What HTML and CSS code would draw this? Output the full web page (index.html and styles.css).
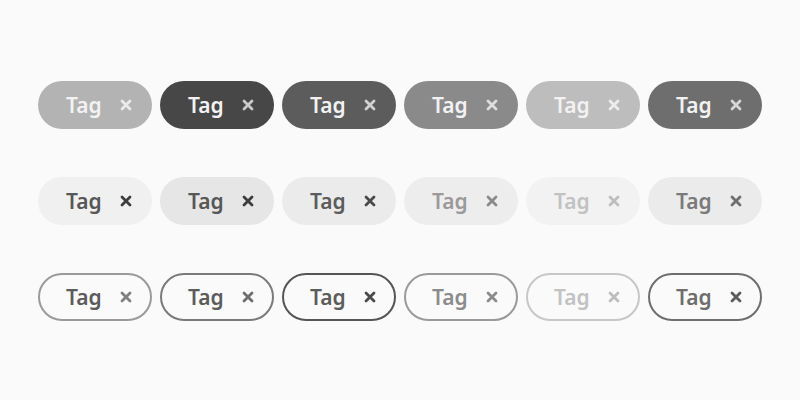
FILE: index.html
```html
<!DOCTYPE html>
<html>
<head>
<meta charset="utf-8">
<link rel="stylesheet" href="styles.css">
</head>
<body>
<main class="board">
  <div class="row">
    <span class="tag solid s1">Tag<span class="x"><svg viewBox="0 0 12 12"><path d="M2 2L10 10M10 2L2 10"/></svg></span></span>
    <span class="tag solid s2">Tag<span class="x"><svg viewBox="0 0 12 12"><path d="M2 2L10 10M10 2L2 10"/></svg></span></span>
    <span class="tag solid s3">Tag<span class="x"><svg viewBox="0 0 12 12"><path d="M2 2L10 10M10 2L2 10"/></svg></span></span>
    <span class="tag solid s4">Tag<span class="x"><svg viewBox="0 0 12 12"><path d="M2 2L10 10M10 2L2 10"/></svg></span></span>
    <span class="tag solid s5">Tag<span class="x"><svg viewBox="0 0 12 12"><path d="M2 2L10 10M10 2L2 10"/></svg></span></span>
    <span class="tag solid s6">Tag<span class="x"><svg viewBox="0 0 12 12"><path d="M2 2L10 10M10 2L2 10"/></svg></span></span>
  </div>
  <div class="row">
    <span class="tag soft t1">Tag<span class="x"><svg viewBox="0 0 12 12"><path d="M2 2L10 10M10 2L2 10"/></svg></span></span>
    <span class="tag soft t2">Tag<span class="x"><svg viewBox="0 0 12 12"><path d="M2 2L10 10M10 2L2 10"/></svg></span></span>
    <span class="tag soft t3">Tag<span class="x"><svg viewBox="0 0 12 12"><path d="M2 2L10 10M10 2L2 10"/></svg></span></span>
    <span class="tag soft t4">Tag<span class="x"><svg viewBox="0 0 12 12"><path d="M2 2L10 10M10 2L2 10"/></svg></span></span>
    <span class="tag soft t5">Tag<span class="x"><svg viewBox="0 0 12 12"><path d="M2 2L10 10M10 2L2 10"/></svg></span></span>
    <span class="tag soft t6">Tag<span class="x"><svg viewBox="0 0 12 12"><path d="M2 2L10 10M10 2L2 10"/></svg></span></span>
  </div>
  <div class="row">
    <span class="tag outline o1">Tag<span class="x"><svg viewBox="0 0 12 12"><path d="M2 2L10 10M10 2L2 10"/></svg></span></span>
    <span class="tag outline o2">Tag<span class="x"><svg viewBox="0 0 12 12"><path d="M2 2L10 10M10 2L2 10"/></svg></span></span>
    <span class="tag outline o3">Tag<span class="x"><svg viewBox="0 0 12 12"><path d="M2 2L10 10M10 2L2 10"/></svg></span></span>
    <span class="tag outline o4">Tag<span class="x"><svg viewBox="0 0 12 12"><path d="M2 2L10 10M10 2L2 10"/></svg></span></span>
    <span class="tag outline o5">Tag<span class="x"><svg viewBox="0 0 12 12"><path d="M2 2L10 10M10 2L2 10"/></svg></span></span>
    <span class="tag outline o6">Tag<span class="x"><svg viewBox="0 0 12 12"><path d="M2 2L10 10M10 2L2 10"/></svg></span></span>
  </div>
</main>
</body>
</html>
```

FILE: styles.css
```css
html, body {
  margin: 0;
  padding: 0;
  background: #fafafa;
}
.board {
  width: 800px;
  height: 400px;
  box-sizing: border-box;
  padding-top: 81px;
  display: flex;
  flex-direction: column;
  align-items: center;
  gap: 48px;
  font-family: "Noto Sans", "Open Sans", sans-serif;
}
.row {
  display: flex;
  gap: 8px;
}
.tag {
  box-sizing: border-box;
  width: 114px;
  height: 48px;
  border-radius: 24px;
  display: flex;
  align-items: center;
  padding-left: 28px;
  font-size: 21px;
  font-weight: 600;
  line-height: 1;
}
.x {
  display: flex;
  align-items: center;
  justify-content: center;
  width: 24px;
  height: 24px;
  margin-left: auto;
  margin-right: 14px;
}
.x svg {
  width: 12px;
  height: 12px;
  fill: none;
  stroke: currentColor;
  stroke-width: 2.8;
  stroke-linecap: round;
}
.outline { border: 2px solid; padding-left: 26px; }
.outline .x { margin-right: 12px; }

.solid { color: #f2f2f2; }
.solid .x { color: rgba(255,255,255,0.72); }
.s1 { background: #b3b3b3; }
.s2 { background: #474747; }
.s3 { background: #5c5c5c; }
.s4 { background: #8a8a8a; }
.s5 { background: #bdbdbd; }
.s6 { background: #6e6e6e; }

.t1 { background: #f0f0f0; color: #575757; }
.t1 .x { color: #3d3d3d; }
.t2 { background: #e6e6e6; color: #575757; }
.t2 .x { color: #3d3d3d; }
.t3 { background: #ebebeb; color: #5c5c5c; }
.t3 .x { color: #4a4a4a; }
.t4 { background: #ededed; color: #9a9a9a; }
.t4 .x { color: #8a8a8a; }
.t5 { background: #f2f2f2; color: #c2c2c2; }
.t5 .x { color: #bdbdbd; }
.t6 { background: #ebebeb; color: #7a7a7a; }
.t6 .x { color: #6e6e6e; }

.o1 { border-color: #9a9a9a; color: #5c5c5c; }
.o1 .x { color: #808080; }
.o2 { border-color: #7a7a7a; color: #5c5c5c; }
.o2 .x { color: #6e6e6e; }
.o3 { border-color: #555555; color: #5c5c5c; }
.o3 .x { color: #4a4a4a; }
.o4 { border-color: #9a9a9a; color: #8c8c8c; }
.o4 .x { color: #8a8a8a; }
.o5 { border-color: #c7c7c7; color: #c2c2c2; }
.o5 .x { color: #bdbdbd; }
.o6 { border-color: #6e6e6e; color: #6e6e6e; }
.o6 .x { color: #5c5c5c; }
```
